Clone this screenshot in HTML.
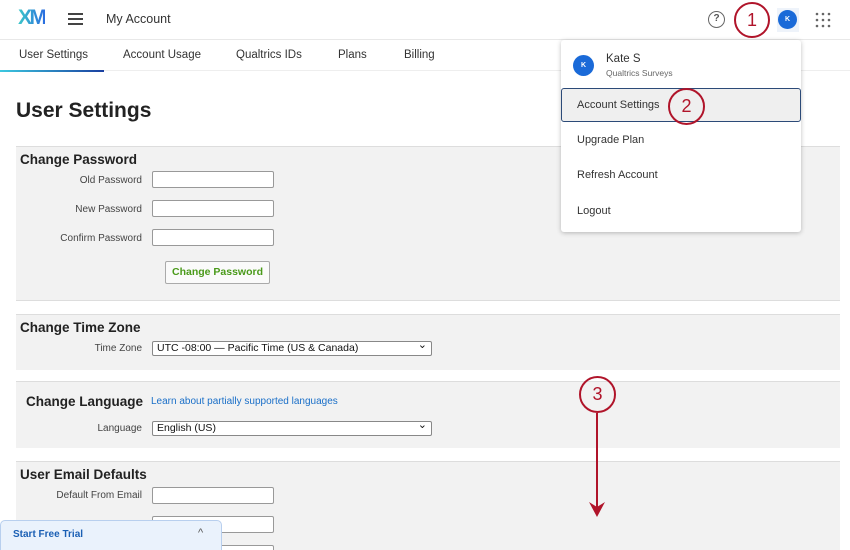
<!DOCTYPE html>
<html style="width:850px;height:550px;overflow:hidden"><head><style>
*{margin:0;padding:0;box-sizing:border-box}
body{width:850px;height:550px;overflow:hidden;background:#fff;font-family:"Liberation Sans",sans-serif;color:#333;position:relative}
#w{position:relative;width:850px;height:550px;overflow:hidden}
.a{position:absolute}
.panel{position:absolute;left:16px;width:824px;background:#f2f2f2;border-top:1px solid #ddd}
.h{position:absolute;font-weight:bold;font-size:13.5px;color:#222}
.lbl{position:absolute;font-size:10px;color:#444;text-align:right;width:130px;left:12px}
.inp{position:absolute;background:#fff;border:1px solid #999;border-radius:2px;height:17px}
.sel{position:absolute;background:#fff;border:1px solid #888;border-radius:2px;height:15px;font-size:10.5px;padding-left:4px;line-height:13px;color:#111}
.sel:after{content:"⌄";position:absolute;right:4px;top:-3px;font-size:11px}
.tab{position:absolute;top:49px;font-size:11.5px;color:#333}
.mi{position:absolute;left:577px;font-size:11px;color:#333}
.circ{position:absolute;border:2px solid #b0142a;border-radius:50%;color:#b0142a;font-size:18px;text-align:center;background:transparent}
</style></head><body><div id="w">
<div class="a" style="left:0;top:39px;width:850px;height:1px;background:#e8e8e8"></div>
<div class="a" style="left:18px;top:6px;font-size:21px;font-weight:bold;letter-spacing:-2.5px;background:linear-gradient(90deg,#3cc8c8,#2a6de0);-webkit-background-clip:text;color:transparent">XM</div>
<div class="a" style="left:68px;top:13px;width:15px;height:2px;background:#444;box-shadow:0 5px 0 #444,0 10px 0 #444"></div>
<div class="a" style="left:106px;top:12px;font-size:12.5px;color:#333">My Account</div>
<div class="a" style="left:708px;top:11px;width:17px;height:17px;border:1.5px solid #666;border-radius:50%;font-size:10px;text-align:center;line-height:14px;color:#555;font-weight:bold">?</div>
<div class="a" style="left:777px;top:8px;width:22px;height:24px;background:#eef3fa"></div>
<div class="a" style="left:778px;top:10px;width:19px;height:19px;background:#1a6ad8;border-radius:50%;color:#fff;font-size:7px;text-align:center;line-height:19px;font-weight:bold">K</div>
<svg class="a" style="left:815px;top:12px" width="16" height="16"><g fill="#666"><circle cx="2" cy="2" r="1.3"/><circle cx="8" cy="2" r="1.3"/><circle cx="14" cy="2" r="1.3"/><circle cx="2" cy="8" r="1.3"/><circle cx="8" cy="8" r="1.3"/><circle cx="14" cy="8" r="1.3"/><circle cx="2" cy="14" r="1.3"/><circle cx="8" cy="14" r="1.3"/><circle cx="14" cy="14" r="1.3"/></g></svg>
<div class="tab" style="left:19px">User Settings</div>
<div class="tab" style="left:123px">Account Usage</div>
<div class="tab" style="left:236px">Qualtrics IDs</div>
<div class="tab" style="left:338px">Plans</div>
<div class="tab" style="left:404px">Billing</div>
<div class="a" style="left:0;top:70px;width:850px;height:1px;background:#eee"></div>
<div class="a" style="left:0;top:70px;width:104px;height:2px;background:linear-gradient(90deg,#3cc8e0,#1a3fa0)"></div>
<div class="a" style="left:16px;top:99px;font-size:21px;font-weight:bold;color:#222">User Settings</div>

<div class="panel" style="top:146px;height:155px;border-bottom:1px solid #ddd"></div>
<div class="h" style="left:20px;top:152px">Change Password</div>
<div class="lbl" style="top:175px">Old Password</div><div class="inp" style="left:152px;top:171px;width:122px"></div>
<div class="lbl" style="top:204px">New Password</div><div class="inp" style="left:152px;top:200px;width:122px"></div>
<div class="lbl" style="top:233px">Confirm Password</div><div class="inp" style="left:152px;top:229px;width:122px"></div>
<div class="a" style="left:165px;top:261px;width:105px;height:23px;background:#fafafa;border:1px solid #aaa;border-radius:2px;font-size:10.5px;font-weight:bold;color:#4a9a1a;text-align:center;line-height:21px">Change Password</div>

<div class="panel" style="top:314px;height:56px"></div>
<div class="h" style="left:20px;top:320px">Change Time Zone</div>
<div class="lbl" style="top:343px">Time Zone</div><div class="sel" style="left:152px;top:341px;width:280px">UTC -08:00 — Pacific Time (US &amp; Canada)</div>

<div class="panel" style="top:381px;height:67px"></div>
<div class="h" style="left:26px;top:394px">Change Language</div>
<div class="a" style="left:151px;top:396px;font-size:10px;color:#1a6fc8">Learn about partially supported languages</div>
<div class="lbl" style="top:423px">Language</div><div class="sel" style="left:152px;top:421px;width:280px">English (US)</div>

<div class="panel" style="top:461px;height:89px"></div>
<div class="h" style="left:20px;top:467px">User Email Defaults</div>
<div class="lbl" style="top:490px">Default From Email</div><div class="inp" style="left:152px;top:487px;width:122px"></div>
<div class="inp" style="left:152px;top:516px;width:122px"></div>
<div class="inp" style="left:152px;top:545px;width:122px"></div>
<div class="a" style="left:0;top:520px;width:222px;height:32px;background:#eaf2fc;border:1px solid #b8cfee;border-radius:5px 5px 0 0"></div>
<div class="a" style="left:13px;top:529px;font-size:10px;font-weight:bold;color:#1a5fb4">Start Free Trial</div>
<div class="a" style="left:198px;top:527px;font-size:11px;color:#555">^</div>

<div class="a" style="left:561px;top:40px;width:240px;height:192px;background:#fff;border-radius:3px;box-shadow:0 1px 5px rgba(0,0,0,.25)"></div>
<div class="a" style="left:573px;top:55px;width:21px;height:21px;background:#1a6ad8;border-radius:50%;color:#fff;font-size:7px;text-align:center;line-height:21px;font-weight:bold">K</div>
<div class="a" style="left:606px;top:53px;font-size:11.5px;color:#333">Kate S</div>
<div class="a" style="left:606px;top:68px;font-size:8.5px;color:#666">Qualtrics Surveys</div>
<div class="a" style="left:561px;top:88px;width:240px;height:34px;background:#efefef;border:1.5px solid #2c4a78;border-radius:3px"></div>
<div class="mi" style="top:99px">Account Settings</div>
<div class="mi" style="top:134px">Upgrade Plan</div>
<div class="mi" style="top:169px">Refresh Account</div>
<div class="mi" style="top:205px">Logout</div>

<div class="circ" style="left:734px;top:2px;width:36px;height:36px;line-height:32px">1</div>
<div class="circ" style="left:668px;top:88px;width:37px;height:37px;line-height:33px">2</div>
<div class="circ" style="left:579px;top:376px;width:37px;height:37px;line-height:33px">3</div>
<div class="a" style="left:596px;top:413px;width:2px;height:95px;background:#b0142a"></div>
<svg class="a" style="left:589px;top:502px" width="16" height="16"><path d="M0 0L8 15L16 0L8 5Z" fill="#b0142a"/></svg>
</div></body></html>
